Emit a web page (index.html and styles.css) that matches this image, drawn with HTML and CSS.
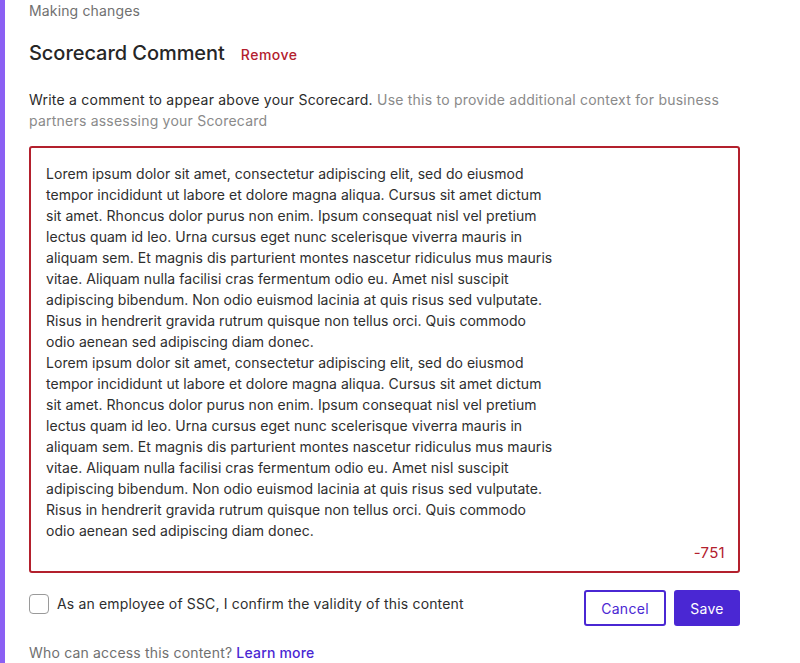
FILE: index.html
```html
<!DOCTYPE html>
<html>
<head>
<meta charset="utf-8">
<link rel="stylesheet" href="styles.css">
</head>
<body>
<div class="page">
  <div class="accent"></div>
  <main class="content">
    <p class="muted top">Making changes</p>
    <div class="heading-row">
      <h2 class="heading">Scorecard Comment</h2>
      <a class="remove">Remove</a>
    </div>
    <p class="desc"><span class="dark">Write a comment to appear above your Scorecard.</span> Use this to provide additional context for business partners assessing your Scorecard</p>
    <div class="editor">
      <div class="editor-text">Lorem ipsum dolor sit amet, consectetur adipiscing elit, sed do eiusmod<br>tempor incididunt ut labore et dolore magna aliqua. Cursus sit amet dictum<br>sit amet. Rhoncus dolor purus non enim. Ipsum consequat nisl vel pretium<br>lectus quam id leo. Urna cursus eget nunc scelerisque viverra mauris in<br>aliquam sem. Et magnis dis parturient montes nascetur ridiculus mus mauris<br>vitae. Aliquam nulla facilisi cras fermentum odio eu. Amet nisl suscipit<br>adipiscing bibendum. Non odio euismod lacinia at quis risus sed vulputate.<br>Risus in hendrerit gravida rutrum quisque non tellus orci. Quis commodo<br>odio aenean sed adipiscing diam donec.<br>Lorem ipsum dolor sit amet, consectetur adipiscing elit, sed do eiusmod<br>tempor incididunt ut labore et dolore magna aliqua. Cursus sit amet dictum<br>sit amet. Rhoncus dolor purus non enim. Ipsum consequat nisl vel pretium<br>lectus quam id leo. Urna cursus eget nunc scelerisque viverra mauris in<br>aliquam sem. Et magnis dis parturient montes nascetur ridiculus mus mauris<br>vitae. Aliquam nulla facilisi cras fermentum odio eu. Amet nisl suscipit<br>adipiscing bibendum. Non odio euismod lacinia at quis risus sed vulputate.<br>Risus in hendrerit gravida rutrum quisque non tellus orci. Quis commodo<br>odio aenean sed adipiscing diam donec.</div>
      <div class="counter">-751</div>
    </div>
    <div class="actions">
      <label class="confirm"><span class="checkbox"></span><span>As an employee of SSC, I confirm the validity of this content</span></label>
      <div class="buttons">
        <button class="btn btn-outline">Cancel</button>
        <button class="btn btn-solid">Save</button>
      </div>
    </div>
    <p class="muted access">Who can access this content? <a class="link">Learn more</a></p>
  </main>
</div>
</body>
</html>
```

FILE: styles.css
```css
* { box-sizing: border-box; }
html, body { margin: 0; padding: 0; background: #fff; }
body {
  font-family: Inter, "Noto Sans", sans-serif;
  font-size: 14px;
  line-height: 21px;
  color: #2b2b2b;
  width: 800px;
  height: 663px;
  overflow: hidden;
}
.page { display: flex; min-height: 663px; }
.accent { width: 5px; background: #8b5ff3; flex: none; }
.content { padding-left: 24px; width: 735px; }
p { margin: 0; }
.muted { color: #707070; }
.top { letter-spacing: 0.15px; }
.heading-row { display: flex; align-items: center; gap: 16px; margin-top: 18px; height: 28px; }
.heading { margin: 0; font-size: 20px; font-weight: 500; line-height: 28px; color: #262626; letter-spacing: -0.05px; }
.remove { color: #b3202d; font-size: 14px; font-weight: 500; margin-top: 3px; letter-spacing: 0.5px; }
.desc { margin-top: 22px; color: #8a8a8a; width: 711px; letter-spacing: 0.22px; }
.dark { color: #2b2b2b; }
.editor {
  margin-top: 15px;
  width: 711px;
  border: 2px solid #b3202d;
  border-radius: 3px;
  padding: 15px 13px 8px 15px;
}
.editor-text { color: #2e2e2e; white-space: nowrap; letter-spacing: 0.04px; }
.counter { text-align: right; color: #b3202d; margin-top: 1px; font-size: 15px; letter-spacing: 0.3px; }
.actions { display: flex; justify-content: space-between; align-items: flex-start; margin-top: 17px; width: 711px; }
.confirm { display: flex; align-items: center; gap: 8px; margin-top: 3px; color: #2e2e2e; letter-spacing: 0.16px; }
.checkbox { width: 20px; height: 20px; border: 1px solid #9a9a9a; border-radius: 4px; background: #fff; flex: none; }
.buttons { display: flex; gap: 8px; }
.btn {
  font-family: inherit;
  font-size: 14px;
  height: 36px;
  padding: 0;
  border-radius: 3px;
  border: 2px solid #4a27d3;
  cursor: pointer;
  letter-spacing: 0.3px;
  text-align: center;
}
.btn-outline { background: #fff; color: #4a27d3; width: 82px; }
.btn-solid { background: #4a27d3; color: #fff; width: 66px; }
.access { margin-top: 16px; letter-spacing: 0.18px; }
.link { color: #4a27d3; font-weight: 500; }
```
